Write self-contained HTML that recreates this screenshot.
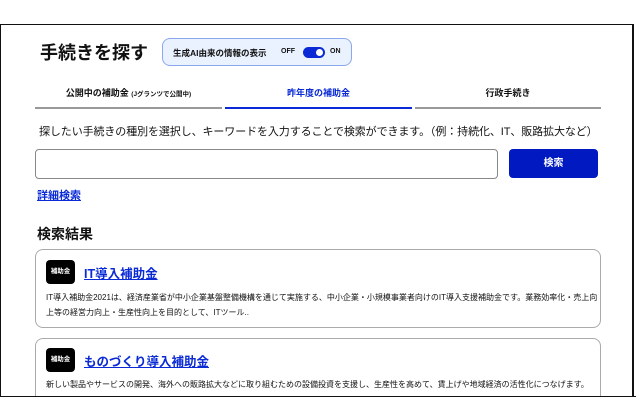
<!DOCTYPE html>
<html><head><meta charset="utf-8"><style>
*{margin:0;padding:0;box-sizing:border-box}
body{width:636px;height:417px;background:#fff;font-family:"Liberation Sans","Noto Sans CJK JP",sans-serif;color:#111;position:relative;overflow:hidden}
.frame{position:absolute;left:0;top:24px;width:634px;height:373px;border:1.5px solid #111;border-right-width:2px;overflow:hidden}
.a{position:absolute;white-space:nowrap}
.h1{left:40px;top:39px;font-size:18px;font-weight:700}
.pill{left:162px;top:38px;width:190px;height:28px;background:#eaf2ff;border:1px solid #8aa8ee;border-radius:8px;font-size:8.5px;font-weight:700}
.tog{position:absolute;left:140px;top:8px;width:22px;height:11px;background:#0a2ad6;border-radius:6px}
.tog:after{content:"";position:absolute;right:2px;top:2px;width:7px;height:7px;background:#fff;border-radius:50%}
.tab{top:86px;font-size:9px;font-weight:700;text-align:center}
.line{position:absolute;top:107px;height:2px;background:#999}
.card{position:absolute;left:35px;width:566px;border:1px solid #aaa;border-radius:8px;background:#fff}
.badge{position:absolute;left:10px;width:29px;height:24px;background:#000;color:#fff;border-radius:4px;font-size:6.5px;font-weight:700;text-align:center;line-height:24px}
.ttl{position:absolute;left:48px;font-size:12.5px;font-weight:700;color:#0a2ad6;text-decoration:underline}
.txt{position:absolute;left:10px;font-size:8px;line-height:14.5px;white-space:nowrap}
</style></head><body>
<div class="frame"></div>
<div class="a h1">手続きを探す</div>
<div class="a pill"><span style="position:absolute;left:10px;top:8px">生成AI由来の情報の表示</span><span style="position:absolute;left:118px;top:9px;font-size:7px">OFF</span><div class="tog"></div><span style="position:absolute;left:167px;top:9px;font-size:7px">ON</span></div>
<div class="a tab" style="left:35px;width:187px">公開中の補助金 <span style="font-size:6.5px">(Jグランツで公開中)</span></div>
<div class="a tab" style="left:225px;width:187px;color:#0a2ad6">昨年度の補助金</div>
<div class="a tab" style="left:415px;width:186px">行政手続き</div>
<div class="line" style="left:35px;width:187px"></div>
<div class="line" style="left:225px;width:187px;background:#0a2ad6"></div>
<div class="line" style="left:415px;width:186px"></div>
<div class="a" style="left:39px;top:123px;font-size:11px;letter-spacing:-0.1px">探したい手続きの種別を選択し、キーワードを入力することで検索ができます。（例：持続化、IT、販路拡大など）</div>
<div class="a" style="left:35px;top:149px;width:463px;height:30px;border:1px solid #888;border-radius:4px"></div>
<div class="a" style="left:509px;top:149px;width:89px;height:29px;background:#0019c0;border-radius:4px;color:#fff;font-size:10px;font-weight:700;text-align:center;line-height:29px">検索</div>
<div class="a" style="left:37px;top:187px;font-size:11px;font-weight:700;color:#0a2ad6;text-decoration:underline">詳細検索</div>
<div class="a" style="left:37px;top:224px;font-size:14px;font-weight:700">検索結果</div>
<div class="card" style="top:249px;height:79px">
<div class="badge" style="top:10px">補助金</div>
<div class="ttl" style="top:13px">IT導入補助金</div>
<div class="txt" style="top:41px">IT導入補助金2021は、経済産業省が中小企業基盤整備機構を通じて実施する、中小企業・小規模事業者向けのIT導入支援補助金です。業務効率化・売上向<br>上等の経営力向上・生産性向上を目的として、ITツール..</div>
</div>
<div class="card" style="top:338px;height:70px">
<div class="badge" style="top:9px">補助金</div>
<div class="ttl" style="top:12px">ものづくり導入補助金</div>
<div class="txt" style="top:39px">新しい製品やサービスの開発、海外への販路拡大などに取り組むための設備投資を支援し、生産性を高めて、賃上げや地域経済の活性化につなげます。</div>
</div>
<div class="a" style="left:0;top:396px;width:636px;height:21px;background:#fff;border-top:1.5px solid #111"></div>
</body></html>
